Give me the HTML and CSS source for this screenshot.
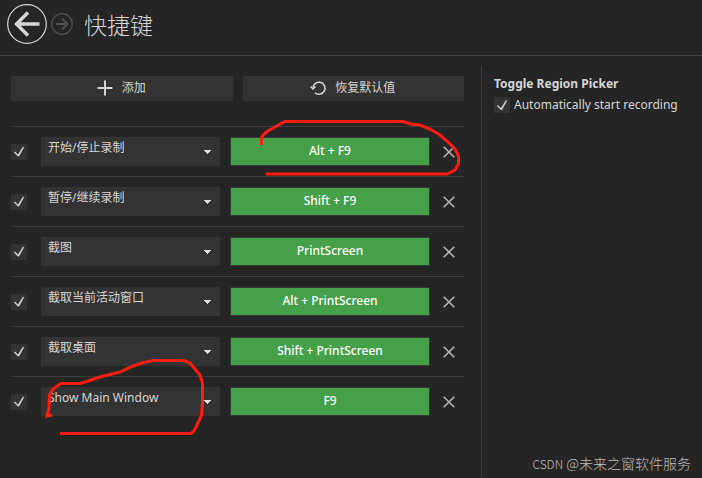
FILE: index.html
```html
<!DOCTYPE html>
<html lang="zh-CN">
<head>
<meta charset="utf-8">
<meta name="viewport" content="width=device-width, initial-scale=1">
<title>快捷键</title>
<link rel="stylesheet" href="styles.css">
</head>
<body>
<header class="header">
  <button class="nav nav-back" type="button" aria-label="Back">
    <svg width="40" height="40" viewBox="0 0 40 40"><circle cx="20" cy="20" r="19.3" stroke-width="1.2"/><path d="M32.500 20H9M21 8.500L9.500 20L21 31.500" stroke-width="3.400"/></svg>
  </button>
  <button class="nav nav-forward" type="button" aria-label="Forward" disabled>
    <svg width="22" height="22" viewBox="0 0 22 22"><circle cx="11" cy="11" r="10.300" stroke-width="1.200"/><path d="M5 11H16M11 5.500L16.500 11L11 16.500" stroke-width="2"/></svg>
  </button>
  <h1 class="title">快捷键</h1>
</header>
<main class="content">
  <section class="hotkeys">
    <div class="toolbar">
      <button class="tool" type="button">
        <svg width="16" height="16" viewBox="0 0 16 16"><path d="M8 0.500V15.500M0.500 8H15.500" stroke-width="2"/></svg>
        添加
      </button>
      <button class="tool" type="button">
        <svg width="16" height="16" viewBox="0 0 16 16"><path d="M3 8.500A6 6 0 1 1 5 12.700" stroke-width="1.500"/><path d="M0.500 6.500L3 9L5.500 6.500" stroke-width="1.500"/></svg>
        恢复默认值
      </button>
    </div>
    <ul class="list">
      <li class="row">
        <input class="check" type="checkbox" checked aria-label="启用 开始/停止录制">
        <select class="action" aria-label="操作"><option>开始/停止录制</option></select>
        <button class="key" type="button">Alt + F9</button>
        <button class="remove" type="button" aria-label="删除"><svg width="12" height="12" viewBox="0 0 12 12"><path d="M0.700 0.700L11.300 11.300M11.300 0.700L0.700 11.300"/></svg></button>
      </li>
      <li class="row">
        <input class="check" type="checkbox" checked aria-label="启用 暂停/继续录制">
        <select class="action" aria-label="操作"><option>暂停/继续录制</option></select>
        <button class="key" type="button">Shift + F9</button>
        <button class="remove" type="button" aria-label="删除"><svg width="12" height="12" viewBox="0 0 12 12"><path d="M0.700 0.700L11.300 11.300M11.300 0.700L0.700 11.300"/></svg></button>
      </li>
      <li class="row">
        <input class="check" type="checkbox" checked aria-label="启用 截图">
        <select class="action" aria-label="操作"><option>截图</option></select>
        <button class="key" type="button">PrintScreen</button>
        <button class="remove" type="button" aria-label="删除"><svg width="12" height="12" viewBox="0 0 12 12"><path d="M0.700 0.700L11.300 11.300M11.300 0.700L0.700 11.300"/></svg></button>
      </li>
      <li class="row">
        <input class="check" type="checkbox" checked aria-label="启用 截取当前活动窗口">
        <select class="action" aria-label="操作"><option>截取当前活动窗口</option></select>
        <button class="key" type="button">Alt + PrintScreen</button>
        <button class="remove" type="button" aria-label="删除"><svg width="12" height="12" viewBox="0 0 12 12"><path d="M0.700 0.700L11.300 11.300M11.300 0.700L0.700 11.300"/></svg></button>
      </li>
      <li class="row">
        <input class="check" type="checkbox" checked aria-label="启用 截取桌面">
        <select class="action" aria-label="操作"><option>截取桌面</option></select>
        <button class="key" type="button">Shift + PrintScreen</button>
        <button class="remove" type="button" aria-label="删除"><svg width="12" height="12" viewBox="0 0 12 12"><path d="M0.700 0.700L11.300 11.300M11.300 0.700L0.700 11.300"/></svg></button>
      </li>
      <li class="row">
        <input class="check" type="checkbox" checked aria-label="启用 Show Main Window">
        <select class="action" aria-label="操作"><option>Show Main Window</option></select>
        <button class="key" type="button">F9</button>
        <button class="remove" type="button" aria-label="删除"><svg width="12" height="12" viewBox="0 0 12 12"><path d="M0.700 0.700L11.300 11.300M11.300 0.700L0.700 11.300"/></svg></button>
      </li>
    </ul>
  </section>
  <aside class="options">
    <h2 class="options-title">Toggle Region Picker</h2>
    <label class="option"><input class="check" type="checkbox" checked>Automatically start recording</label>
  </aside>
</main>
<svg class="marks" width="702" height="478" viewBox="0 0 702 478" aria-hidden="true">
  <path d="M261.500 145V138L263 135L268 131L275 127L285 121.500H403L411 124L420 125L430 129L440 135L447 141L455 149L458.500 156L458.500 164L455 170L447 174H266"/>
  <path d="M52 415L47 416L49 408L49.500 395L53 389L61 383.500H80L88 381L100 377L108 375L120 372L132 366.500L142 363L153 360.500H184L190 363L195 369L200 375L202.500 383V403L201.500 415L197 425L194 431L191 433.500H60"/>
</svg>
<footer class="credit"><span class="credit-site">CSDN</span> @未来之窗软件服务</footer>
</body>
</html>
```

FILE: styles.css
```css
* {
  box-sizing: border-box;
}

body {
  position: relative;
  display: flex;
  flex-direction: column;
  min-height: 100vh;
  margin: 0;
  background: #252525;
  color: #d6d6d6;
  font: 12px/18px "Noto Sans", "Noto Sans CJK SC", sans-serif;
}

button,
select {
  font: inherit;
  color: inherit;
  border: 0;
  border-radius: 0;
}

svg {
  display: block;
  fill: none;
  stroke: currentColor;
}

.header {
  display: flex;
  align-items: center;
  height: 56px;
  padding: 0 7px 8px;
  border-bottom: 1px solid #434343;
}

.nav {
  padding: 0;
  background: none;
}

.nav-back {
  margin-right: 4px;
}

.nav-forward {
  margin-right: 11px;
  color: #505050;
}

.title {
  margin: 0;
  font-size: 23px;
  font-weight: 300;
  line-height: 32px;
  font-family: "Noto Sans CJK SC", sans-serif;
}

.content {
  flex: 1;
  display: grid;
  grid-template-columns: 470fr 221fr;
  padding: 10px 0 0 11px;
}

.hotkeys {
  padding: 10px 17px 0 0;
}

.toolbar {
  display: flex;
  gap: 10px;
  margin-bottom: 25px;
}

.tool {
  flex: 1;
  display: flex;
  align-items: center;
  justify-content: center;
  gap: 9px;
  height: 25px;
  padding: 0 1px 2px 0;
  background: #333;
}

.list {
  margin: 0;
  padding: 0;
  list-style: none;
}

.row {
  display: grid;
  grid-template-columns: 16px 183fr 200fr 15px;
  column-gap: 10px;
  align-items: center;
  height: 50px;
  padding-right: 9px;
  border-top: 1px solid #3d3d40;
}

.check {
  appearance: none;
  flex: none;
  width: 16px;
  height: 16px;
  margin: 0;
  background: #333;
}

.check:checked::before {
  content: "";
  display: block;
  width: 16px;
  height: 16px;
  background: #d0d0d0;
  clip-path: polygon(3px 9px, 4px 8px, 7px 11px, 12px 3px, 13px 4px, 8px 13px, 7px 13px);
}

.action {
  appearance: none;
  min-width: 0;
  height: 29px;
  margin-left: 4px;
  padding: 0 24px 8px 7px;
  background-color: #333;
  background-image:
    linear-gradient(to bottom left, #dedede 50%, transparent 50%),
    linear-gradient(to bottom right, #dedede 50%, transparent 50%);
  background-repeat: no-repeat;
  background-size: 4px 4px;
  background-position: right 12px top 13px, right 8px top 13px;
}

.key {
  height: 29px;
  padding: 0 0 2px;
  border: 1px solid #343a37;
  background: #45a049;
  color: #fff;
  font-weight: 500;
}

.remove {
  padding: 0 0 0 3px;
  background: none;
  color: #b4b4b4;
}

.remove svg {
  stroke-width: 1.6;
}

.options {
  padding: 9px 12px;
  border-left: 1px solid #3d3d40;
}

.options-title {
  margin: 0 0 3px;
  font-size: 12px;
  line-height: 18px;
}

.option {
  display: flex;
  align-items: center;
  gap: 4px;
  white-space: nowrap;
}

.marks {
  position: absolute;
  top: 0;
  left: 0;
  pointer-events: none;
  stroke: #ff1d0f;
  stroke-width: 3;
}

.credit {
  position: absolute;
  right: 11px;
  bottom: 5px;
  color: #bdbdbd;
  font-size: 14px;
  font-weight: 300;
  font-family: "Noto Sans CJK SC", sans-serif;
}

.credit-site {
  font-size: 12px;
}
```
